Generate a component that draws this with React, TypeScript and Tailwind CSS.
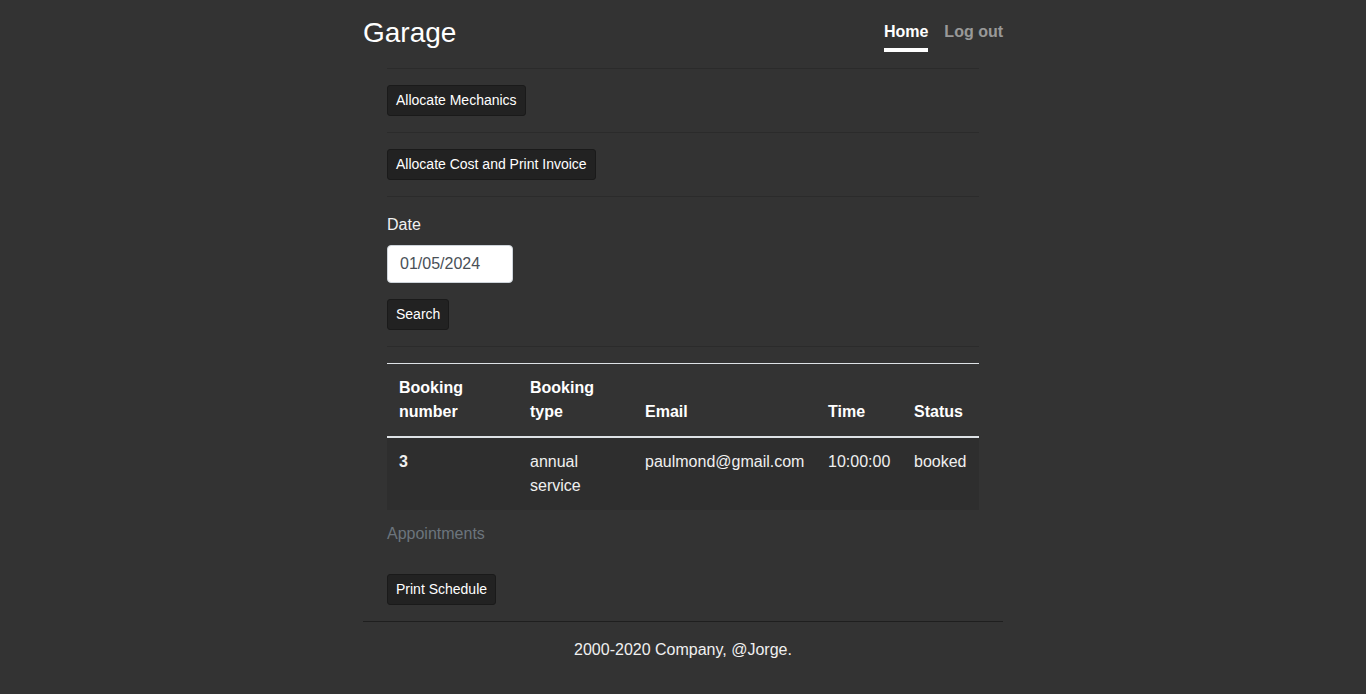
import React from 'react';

const BTN =
  'px-2 py-1 text-sm leading-[21px] text-white bg-[#222] border border-[#1a1a1a] rounded-[3px]';

function Divider() {
  return <hr className="my-4 border-0 border-t border-[#2b2b2b]" />;
}

const COLS = [
  { label: ['Booking', 'number'], w: 'w-[131px]' },
  { label: ['Booking', 'type'], w: 'w-[115px]' },
  { label: ['Email'], w: 'w-[183px]' },
  { label: ['Time'], w: 'w-[86px]' },
  { label: ['Status'], w: 'w-[77px]' },
];

const ROWS = [['3', 'annual service', 'paulmond@gmail.com', '10:00:00', 'booked']];

export default function App() {
  return (
    <div
      className="min-h-screen bg-[#333] text-white text-base leading-6"
      style={{ fontFamily: '"Liberation Sans", Arial, sans-serif' }}
    >
      <div className="w-[640px] mx-auto pt-4">
        <header className="flex items-start justify-between">
          <h3 className="text-[28px] leading-[34px] font-normal mt-0">Garage</h3>
          <nav className="flex gap-4">
            <a className="py-1 font-bold border-b-4 border-white text-white">Home</a>
            <a className="py-1 font-bold border-b-4 border-transparent text-white/50">Log out</a>
          </nav>
        </header>

        <main className="px-6">
          <Divider />
          <button className={BTN}>Allocate Mechanics</button>
          <Divider />
          <button className={BTN}>Allocate Cost and Print Invoice</button>
          <Divider />

          <div>
            <label className="block mb-2 text-[#f0f0f0]">Date</label>
            <input
              type="text"
              readOnly
              defaultValue="01/05/2024"
              className="w-[126px] h-[38px] px-3 bg-white text-[#495057] border border-[#ced4da] rounded outline-none"
            />
            <div className="mt-4">
              <button className={BTN}>Search</button>
            </div>
          </div>
          <Divider />

          <table className="w-full border-collapse mb-4 table-fixed">
            <thead>
              <tr className="border-t border-[#dee2e6]">
                {COLS.map((c) => (
                  <th
                    key={c.label.join(' ')}
                    className={`${c.w} p-3 align-bottom text-left font-bold border-b-2 border-[#dee2e6]`}
                  >
                    {c.label.map((l) => (
                      <div key={l}>{l}</div>
                    ))}
                  </th>
                ))}
              </tr>
            </thead>
            <tbody>
              {ROWS.map((r) => (
                <tr key={r[0]} className="bg-[#2e2e2e]">
                  {r.map((v, i) => (
                    <td key={i} className={`p-3 align-top text-[#f0f0f0] ${i === 0 ? 'font-bold' : ''}`}>
                      {i === 1 ? (
                        <>
                          <div>annual</div>
                          <div>service</div>
                        </>
                      ) : (
                        v
                      )}
                    </td>
                  ))}
                </tr>
              ))}
            </tbody>
            <caption className="caption-bottom text-left pt-3 pb-3 text-[#6c757d]">Appointments</caption>
          </table>

          <button className={BTN}>Print Schedule</button>
        </main>

        <footer className="mt-4 border-t border-[#1f1f1f] pt-4 text-center text-[#f0f0f0]">
          2000-2020 Company, @Jorge.
        </footer>
      </div>
    </div>
  );
}
